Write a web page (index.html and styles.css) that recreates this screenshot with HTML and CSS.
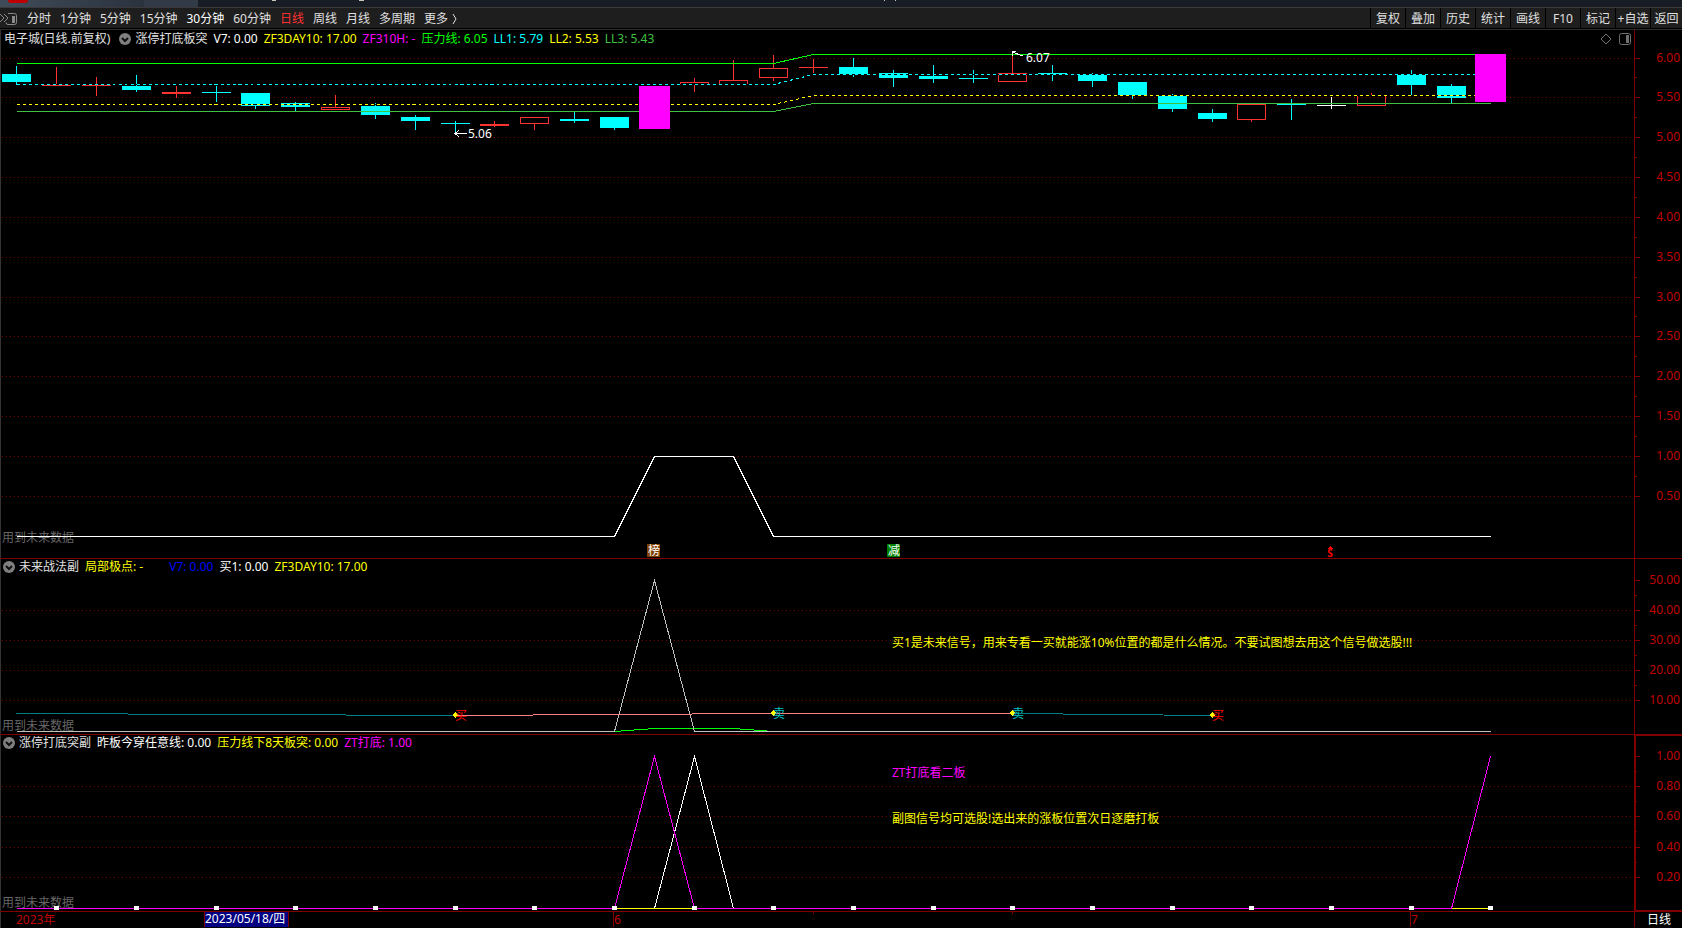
FILE: index.html
```html
<!DOCTYPE html>
<html lang="zh-CN">
<head>
    <meta charset="UTF-8">
    <meta name="viewport" content="width=device-width, initial-scale=1.0">
    <title>电子城 日线</title>
    <link rel="stylesheet" href="styles.css">
</head>
<body>
    <div class="titlebar">
        <div class="title-left"><span class="logo"></span></div>
        <div class="title-tab"></div>
        <svg class="title-marks" height="7" aria-hidden="true">
            <rect x="74" y="0" width="4" height="1"/>
            <rect x="161" y="0" width="5" height="1"/>
            <rect x="686" y="0" width="1" height="1"/>
            <rect x="697" y="0" width="1" height="1"/>
        </svg>
    </div>

    <div class="toolbar">
        <button class="dock" aria-label="侧栏">
            <svg width="18" height="14" viewBox="0 0 18 14">
                <path d="M0 2l4 4-4 4M4 2l4 4-4 4"/>
                <path d="M8 1.5h6.500q2 0 2 2v7q0 2-2 2h-6.500q-2 0-2-2"/>
                <rect x="12" y="4" width="3" height="7"/>
            </svg>
        </button>
        <div class="periods">
            <button>分时</button>
            <button>1分钟</button>
            <button>5分钟</button>
            <button>15分钟</button>
            <button class="strong">30分钟</button>
            <button>60分钟</button>
            <button class="active">日线</button>
            <button>周线</button>
            <button>月线</button>
            <button>多周期</button>
            <button class="more">更多
                <svg width="5" height="12" viewBox="0 0 5 12"><path d="M1 1l3 5-3 5"/></svg>
            </button>
        </div>
        <div class="tools">
            <button>复权</button>
            <button>叠加</button>
            <button>历史</button>
            <button>统计</button>
            <button>画线</button>
            <button>F10</button>
            <button>标记</button>
            <button>+自选</button>
            <button>返回</button>
        </div>
    </div>

    <div class="charts">
        <div class="panel">
            <span class="watermark high">用到未来数据</span>
            <svg class="plot" id="mainPlot"></svg>
            <div class="legend main-legend">
                <span class="stock">电子城(日线.前复权)</span>
                <button class="toggle" aria-label="展开"><svg width="12" height="12" viewBox="0 0 12 12"><circle cx="6" cy="6" r="6"/><path d="M3 5l3 3 3-3"/></svg></button>
                <span>涨停打底板突</span>
                <span class="white">V7: 0.00</span>
                <span class="yellow">ZF3DAY10: 17.00</span>
                <span class="magenta">ZF310H: -</span>
                <span class="lime">压力线: 6.05</span>
                <span class="cyan">LL1: 5.79</span>
                <span class="yellow">LL2: 5.53</span>
                <span class="green">LL3: 5.43</span>
                <span class="corner">
                    <svg width="31" height="12" viewBox="0 0 31 12">
                        <path d="M6 1l5 5-5 5-5-5z"/>
                        <rect x="19.500" y="0.500" width="11" height="11" rx="2"/>
                        <rect class="fill" x="26" y="2" width="3" height="8"/>
                    </svg>
                </span>
            </div>
        </div>
        <div class="panel">
            <span class="watermark">用到未来数据</span>
            <svg class="plot" id="futurePlot"></svg>
            <div class="legend">
                <button class="toggle" aria-label="展开"><svg width="12" height="12" viewBox="0 0 12 12"><circle cx="6" cy="6" r="6"/><path d="M3 5l3 3 3-3"/></svg></button>
                <span>未来战法副</span>
                <span class="yellow wide">局部极点: -</span>
                <span class="blue">V7: 0.00</span>
                <span class="white">买1: 0.00</span>
                <span class="yellow">ZF3DAY10: 17.00</span>
            </div>
        </div>
        <div class="panel">
            <span class="watermark">用到未来数据</span>
            <svg class="plot" id="bottomPlot"></svg>
            <div class="legend">
                <button class="toggle" aria-label="展开"><svg width="12" height="12" viewBox="0 0 12 12"><circle cx="6" cy="6" r="6"/><path d="M3 5l3 3 3-3"/></svg></button>
                <span>涨停打底突副</span>
                <span class="white">昨板今穿任意线: 0.00</span>
                <span class="yellow">压力线下8天板突: 0.00</span>
                <span class="magenta">ZT打底: 1.00</span>
            </div>
        </div>
        <svg class="timeline" id="timeline"></svg>
    </div>
    <script src="chart.js"></script>
</body>
</html>
```
FILE: styles.css
```css
* {
    box-sizing: border-box;
}
body {
    margin: 0;
    height: 100vh;
    display: flex;
    flex-direction: column;
    overflow: hidden;
    background-color: #000000;
    color: #e0e0e0;
    font-family: "Noto Sans", "Noto Sans CJK SC", sans-serif;
    font-size: 12px;
    line-height: 18px;
}
button {
    padding: 0;
    border: none;
    background: none;
    color: inherit;
    font: inherit;
    white-space: nowrap;
    cursor: pointer;
}
svg {
    display: block;
}

/* Title strip */
.titlebar {
    display: flex;
    flex: none;
    height: 7px;
    background-color: #171c25;
}
.title-left {
    width: 144px;
    padding-left: 8px;
    background: linear-gradient(90deg, #414c5a, #2a323e);
}
.logo {
    display: block;
    width: 20px;
    height: 3px;
    border-radius: 0 0 4px 4px;
    background-color: #c00000;
}
.title-tab {
    width: 54px;
    background-color: #323a48;
}
.title-marks {
    flex: 1;
    fill: #c8c8b8;
}

/* Toolbar */
.toolbar {
    display: flex;
    flex: none;
    height: 23px;
    border-top: 1px solid #3a3a3a;
    border-bottom: 1px solid #2c2c2c;
    background: linear-gradient(#1e1e1e 20px, #000000 20px);
}
.toolbar button {
    padding-top: 2px;
}
.dock {
    width: 27px;
    height: 20px;
}
.dock svg {
    fill: none;
    stroke: #8a8a8a;
}
.dock rect {
    fill: #8a8a8a;
    stroke: none;
}
.periods {
    display: flex;
    flex: 1;
    gap: 9px;
    height: 20px;
}
.periods .strong {
    color: #ffffff;
}
.periods .active {
    color: #ff3232;
}
.periods .more {
    display: flex;
    align-items: center;
    gap: 4px;
}
.more svg {
    fill: none;
    stroke: #e0e0e0;
}
.tools {
    display: flex;
    height: 20px;
}
.tools button {
    width: 35px;
    border-left: 1px solid #000000;
}
.tools button:last-child {
    width: 32px;
}
.tools button:hover,
.periods button:hover {
    background-color: #333333;
}

/* Chart panels */
.charts {
    flex: 1;
    min-height: 0;
    display: grid;
    grid-template-columns: 100%;
    grid-template-rows: 529fr 176fr 177fr 16px;
    box-shadow: inset 1px 0 #333333;
}
.panel {
    display: grid;
    min-height: 0;
    border-bottom: 1px solid #800000;
}
.panel > * {
    grid-area: 1 / 1;
}
.plot,
.timeline {
    width: 100%;
    height: 100%;
    min-height: 0;
    overflow: visible;
    shape-rendering: crispEdges;
}
.watermark {
    align-self: end;
    padding-left: 2px;
    color: #666666;
    line-height: 16px;
}
.watermark.high {
    padding-bottom: 12px;
}
.legend {
    display: flex;
    align-items: center;
    align-self: start;
    gap: 6px;
    height: 16px;
    padding-left: 3px;
    white-space: nowrap;
}
.main-legend {
    height: 18px;
    padding-left: 4px;
}
.toggle {
    margin-right: -2px;
}
.toggle svg {
    fill: #808080;
}
.toggle path {
    fill: none;
    stroke: #101010;
    stroke-width: 2;
}
.corner {
    margin-left: auto;
    padding-right: 51px;
}
.corner svg {
    fill: none;
    stroke: #707070;
}
.corner .fill {
    fill: #707070;
    stroke: none;
}
.wide {
    margin-right: 20px;
}
.stock {
    margin-right: 3px;
}
.white {
    color: #ffffff;
}
.yellow {
    color: #ffff00;
}
.magenta {
    color: #ff00ff;
}
.lime {
    color: #00ff00;
}
.cyan {
    color: #00ffff;
}
.green {
    color: #40c040;
}
.blue {
    color: #0000ff;
}

/* Drawn parts */
.plot text,
.timeline text {
    fill: currentColor;
}
.scale {
    color: #c00000;
    text-anchor: end;
}
.time {
    color: #c00000;
}
.mark {
    color: #ffffff;
    text-anchor: middle;
}
.dollar {
    color: #ff0000;
    font-size: 10px;
    font-weight: bold;
    text-anchor: middle;
}
.buy {
    color: #ff0000;
}
.sell {
    color: #00c0c0;
}
```
FILE: chart.js
```js
const RED = '#ff3232', CYAN = '#00ffff', MAGENTA = '#ff00ff', WHITE = '#ffffff', AXIS = '#800000';
const AXIS_WIDTH = 48;

// type, top of body, bottom of body, high, low
const candles = [
    ['d', 5.80, 5.70, 5.90, 5.67], ['u', 5.66, 5.66, 5.89, 5.66], ['u', 5.66, 5.66, 5.76, 5.54],
    ['d', 5.65, 5.60, 5.79, 5.59], ['u', 5.57, 5.55, 5.65, 5.51], ['d', 5.57, 5.57, 5.65, 5.46],
    ['d', 5.56, 5.40, 5.56, 5.37], ['d', 5.44, 5.38, 5.45, 5.33], ['u', 5.39, 5.36, 5.54, 5.36],
    ['d', 5.40, 5.28, 5.44, 5.25], ['d', 5.26, 5.21, 5.28, 5.11], ['d', 5.18, 5.18, 5.21, 5.06],
    ['u', 5.17, 5.15, 5.21, 5.15], ['u', 5.26, 5.18, 5.26, 5.11], ['d', 5.23, 5.21, 5.32, 5.20],
    ['d', 5.26, 5.12, 5.26, 5.11], ['z', 5.65, 5.11, 5.65, 5.11], ['u', 5.70, 5.67, 5.75, 5.59],
    ['u', 5.72, 5.67, 5.97, 5.67], ['u', 5.87, 5.76, 6.04, 5.72], ['u', 5.89, 5.87, 5.99, 5.82],
    ['d', 5.89, 5.80, 6.00, 5.77], ['d', 5.81, 5.75, 5.85, 5.65], ['d', 5.77, 5.74, 5.91, 5.70],
    ['d', 5.75, 5.75, 5.85, 5.70], ['u', 5.81, 5.71, 6.07, 5.71], ['d', 5.81, 5.81, 5.91, 5.72],
    ['d', 5.80, 5.71, 5.81, 5.65], ['d', 5.70, 5.53, 5.70, 5.50], ['d', 5.52, 5.36, 5.55, 5.33],
    ['d', 5.31, 5.23, 5.36, 5.21], ['u', 5.42, 5.23, 5.42, 5.21], ['d', 5.42, 5.42, 5.48, 5.23],
    ['w', 5.41, 5.41, 5.51, 5.37], ['u', 5.53, 5.41, 5.56, 5.41], ['d', 5.79, 5.66, 5.85, 5.55],
    ['d', 5.65, 5.50, 5.67, 5.43], ['z', 6.05, 5.45, 6.05, 5.45]
];
const LAST = candles.length - 1;

function add(svg, name, attrs, text) {
    const el = document.createElementNS('http://www.w3.org/2000/svg', name);
    for (const key in attrs) el.setAttribute(key, attrs[key]);
    if (text !== undefined) el.textContent = text;
    svg.appendChild(el);
}

function rect(svg, x, y, width, height, fill) {
    add(svg, 'rect', { x, y, width, height, fill });
}

function label(svg, x, y, text, cls) {
    add(svg, 'text', { x, y: y + 5, class: cls }, text);
}

function indexToX(i) {
    return Math.floor(16 + i * (document.body.clientWidth - 208) / LAST + 0.9);
}

function makePlot(id, opts) {
    const svg = document.getElementById(id);
    svg.innerHTML = '';
    const w = svg.clientWidth, h = svg.clientHeight;
    const exact = v => opts.top + (h - opts.top - opts.bottom) * (opts.max - v) / opts.max;
    const y = v => Math.round(exact(v));
    const axis = w - AXIS_WIDTH;

    rect(svg, axis, 0, 1, h, AXIS);
    const count = Math.round(opts.max / opts.step);
    for (let n = count; n > 0; n--) {
        const v = n * opts.step;
        const gy = Math.floor(exact(v));
        if (n < count || opts.gridTop) {
            add(svg, 'line', { x1: 2, x2: axis - 1, y1: gy + 0.5, y2: gy + 0.5, stroke: AXIS, 'stroke-dasharray': '1 3' });
        }
        rect(svg, axis, gy, 6, 1, AXIS);
        if (n > 1) rect(svg, axis, Math.floor(exact(v - opts.step / 2)), 3, 1, AXIS);
        label(svg, w - 2, gy - 1, v.toFixed(2), 'scale');
    }

    const line = (points, stroke, extra) => {
        const path = points.map(p => (indexToX(p[0]) + 0.5) + ',' + (y(p[1]) + 0.5)).join(' ');
        add(svg, 'polyline', Object.assign({ points: path, fill: 'none', stroke }, extra));
    };
    return { svg, w, h, y, axis, line };
}

function drawMain() {
    const { svg, y, line } = makePlot('mainPlot', { max: 6, step: 0.5, top: 28, bottom: 22, gridTop: true });

    candles.forEach(([type, open, close, high, low], i) => {
        if (type === 'z') return;
        const x = indexToX(i), top = y(open), size = Math.max(y(close) - top, 1);
        const color = { u: RED, d: CYAN, w: WHITE }[type];
        if (type === 'u' && open - close > 0.025) {
            rect(svg, x, y(high), 1, top - y(high), color);
            rect(svg, x, top + size, 1, y(low) - top - size + 1, color);
            add(svg, 'rect', { x: x - 13.5, y: top + 0.5, width: 28, height: size, fill: 'none', stroke: color });
        } else {
            rect(svg, x - 14, top, 29, size, color);
            rect(svg, x, y(high), 1, y(low) - y(high) + 1, color);
        }
    });

    const level = (a, b) => [[0, a], [19, a], [20, b], [LAST, b]];
    const dash = { 'stroke-dasharray': '3 3' };
    line(level(5.94, 6.05), '#00ff00');
    line(level(5.67, 5.80), '#000000');
    line(level(5.67, 5.80), CYAN, dash);
    line(level(5.42, 5.53), '#000000');
    line(level(5.42, 5.53), '#ffff00', dash);
    line(level(5.33, 5.43), '#40c040');

    candles.forEach(([type, open, close], i) => {
        if (type === 'z') rect(svg, indexToX(i) - 15, y(open), 31, y(close) - y(open), MAGENTA);
    });

    line([[0, 0], [15, 0], [16, 1], [18, 1], [19, 0], [LAST, 0]], WHITE);

    // lowest and highest price pointers
    let x = indexToX(11), py = y(5.06);
    add(svg, 'path', { d: `M${x + 12} ${py}.5H${x}m4 -3l-4 3l4 3`, fill: 'none', stroke: WHITE });
    label(svg, x + 13, py, '5.06', 'white');
    x = indexToX(25);
    py = y(6.07);
    add(svg, 'path', { d: `M${x + 11} ${py + 4}L${x} ${py}m4 -1h-4v5`, fill: 'none', stroke: WHITE });
    label(svg, x + 14, py + 5, '6.07', 'white');

    // event marks under the zero line
    const base = y(0);
    rect(svg, indexToX(16) - 7, base + 8, 13, 13, '#804000');
    label(svg, indexToX(16), base + 14, '榜', 'mark');
    rect(svg, indexToX(22) - 6, base + 8, 13, 13, '#008000');
    label(svg, indexToX(22) + 1, base + 14, '减', 'mark');
    x = indexToX(33) - 1;
    add(svg, 'path', { d: `M${x - 2} ${base + 13}l2.500 -3l2.500 3z`, fill: '#ff0000' });
    label(svg, x, base + 16, 'S', 'dollar');
}

function drawFuture() {
    const { svg, y, line } = makePlot('futurePlot', { max: 50, step: 10, top: 21, bottom: 3 });

    line([[15, 0], [16, 1], [18, 1], [19, 0]], '#00ff00');
    line([[0, 0], [15, 0], [16, 50], [17, 0], [LAST, 0]], '#c0c0c0');
    line([[0, 5.9], [11, 5.18]], '#008080');
    line([[11, 5.18], [19, 5.8], [25, 6.07]], '#ff8080');
    line([[25, 6.07], [30, 5.3]], '#008080');

    [[11, 5.18, '买', 'buy'], [19, 5.9, '卖', 'sell'], [25, 6.07, '卖', 'sell'], [30, 5.3, '买', 'buy']].forEach(([i, v, text, cls]) => {
        const x = indexToX(i);
        add(svg, 'path', { d: `M${x - 3} ${y(v)}l3 -3l3 3l-3 3z`, fill: '#ffff00' });
        label(svg, x, y(v), text, cls);
    });
    label(svg, indexToX(22) - 1, y(29.6), '买1是未来信号，用来专看一买就能涨10%位置的都是什么情况。不要试图想去用这个信号做选股!!!', 'yellow');
}

function drawBottom() {
    const { svg, w, h, y, axis, line } = makePlot('bottomPlot', { max: 1, step: 0.2, top: 21, bottom: 3 });

    // selected scale box
    rect(svg, axis, 0, 2, h, AXIS);
    rect(svg, axis, 0, w - axis, 1, AXIS);
    rect(svg, axis, h - 1, w - axis, 1, AXIS);

    line([[16, 0], [17, 1], [18, 0]], WHITE);
    line([[0, 0], [15, 0], [16, 1], [17, 0], [36, 0], [LAST, 1]], MAGENTA);
    line([[15, 0], [17, 0]], '#ffff00');
    line([[36, 0], [LAST, 0]], '#ffff00');
    for (let i = 1; i <= LAST; i += 2) {
        rect(svg, indexToX(i) - 2, y(0) - 2, 5, 4, WHITE);
    }
    label(svg, indexToX(22) - 1, y(0.895), 'ZT打底看二板', 'magenta');
    label(svg, indexToX(22) - 1, y(0.59), '副图信号均可选股!选出来的涨板位置次日逐磨打板', 'yellow');
}

function drawTimeline() {
    const svg = document.getElementById('timeline');
    svg.innerHTML = '';
    const axis = svg.clientWidth - AXIS_WIDTH;
    label(svg, 16, 7, '2023年', 'time');
    const x = indexToX(5) - 12;
    rect(svg, x, 0, 85, 15, AXIS);
    rect(svg, x + 1, 0, 83, 15, '#000080');
    label(svg, x + 1, 6, '2023/05/18/四', 'white');
    [[15, '6'], [35, '7']].forEach(([i, month]) => {
        rect(svg, indexToX(i) - 1, 0, 1, 15, AXIS);
        label(svg, indexToX(i), 7, month, 'time');
    });
    rect(svg, indexToX(20), 0, 1, 2, AXIS);
    rect(svg, indexToX(25), 0, 1, 2, AXIS);
    rect(svg, axis, 0, 1, 15, AXIS);
    label(svg, axis + 13, 7, '日线', 'white');
}

function draw() {
    drawMain();
    drawFuture();
    drawBottom();
    drawTimeline();
}

draw();
window.addEventListener('resize', draw);
```
